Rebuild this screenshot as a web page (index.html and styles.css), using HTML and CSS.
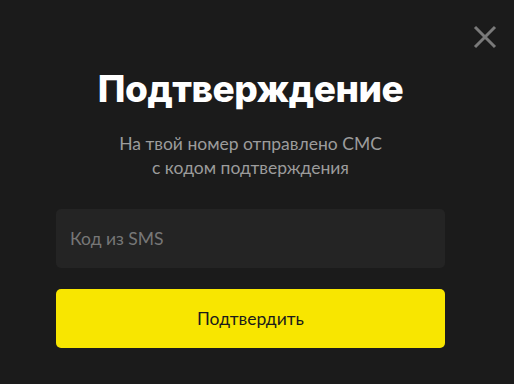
FILE: index.html
```html
<!DOCTYPE html>
<html lang="ru">
<head>
    <meta charset="UTF-8">
    <title>Подтверждение</title>
    <link rel="stylesheet" href="styles.css">
</head>
<body>
<div class="modal">
    <button class="close" aria-label="Закрыть">
        <svg width="24" height="24" viewBox="0 0 24 24"><path d="M2 2L22 22M22 2L2 22" stroke="#7a7a7a" stroke-width="3" fill="none"/></svg>
    </button>
    <h1 class="title">Подтверждение</h1>
    <p class="text">На твой номер отправлено СМС<br>с кодом подтверждения</p>
    <input class="field" type="text" placeholder="Код из SMS">
    <button class="btn">Подтвердить</button>
</div>
</body>
</html>
```
FILE: styles.css
```css
body {
    margin: 0;
    background-color: #1b1b1b;
    font-family: Lato, "Noto Sans", sans-serif;
}
.modal {
    position: relative;
    width: 514px;
    height: 384px;
    box-sizing: border-box;
    padding: 61px 69px 0 56px;
    display: flex;
    flex-direction: column;
    align-items: center;
}
.close {
    position: absolute;
    top: 25px;
    right: 17px;
    background: none;
    border: none;
    padding: 0;
    width: 24px;
    height: 24px;
    cursor: pointer;
}
.close svg {
    display: block;
}
.title {
    margin: 0;
    font-family: Inter, Lato, sans-serif;
    font-size: 37px;
    font-weight: 800;
    letter-spacing: -0.5px;
    color: #fff;
    line-height: 56px;
}
.text {
    margin: 15px 0 0;
    font-size: 17.5px;
    line-height: 24px;
    color: #9c9c9c;
    text-align: center;
}
.field {
    margin-top: 29px;
    width: 100%;
    height: 59px;
    box-sizing: border-box;
    padding: 0 14px;
    background-color: #242424;
    border: none;
    border-radius: 5px;
    font-family: Lato, sans-serif;
    font-size: 17.5px;
    color: #fff;
    outline: none;
}
.field::placeholder {
    color: #777;
}
.btn {
    margin-top: 21px;
    width: 100%;
    height: 59px;
    background-color: #f8e600;
    border: none;
    border-radius: 5px;
    font-family: Lato, sans-serif;
    font-size: 17.5px;
    color: #1b1b1b;
    cursor: pointer;
}
```
